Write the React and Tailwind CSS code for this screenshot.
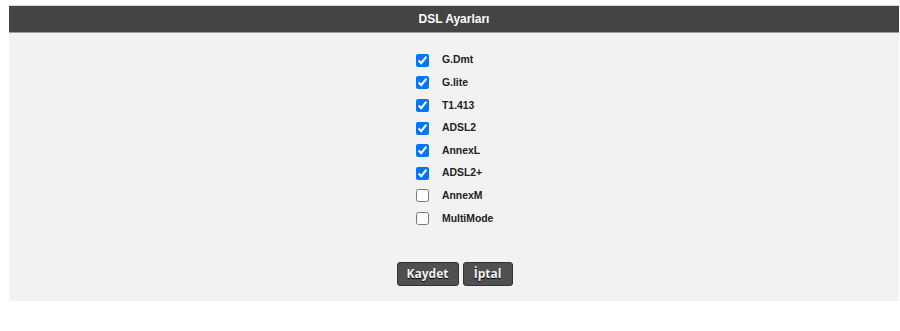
import React, { useState } from 'react'

const modes = [
  { name: 'G.Dmt', on: true },
  { name: 'G.lite', on: true },
  { name: 'T1.413', on: true },
  { name: 'ADSL2', on: true },
  { name: 'AnnexL', on: true },
  { name: 'ADSL2+', on: true },
  { name: 'AnnexM', on: false },
  { name: 'MultiMode', on: false },
]

export default function App() {
  const [state, setState] = useState(modes.map(m => m.on))

  const toggle = (i) => {
    const next = [...state]
    next[i] = !next[i]
    setState(next)
  }

  return (
    <div className="w-[900px] h-[331px] bg-white pt-[5px] pl-[9px] pr-[1px]" style={{ fontFamily: '"Liberation Sans", Arial, sans-serif' }}>
      <div className="bg-[#f2f2f2] h-[296px] flex flex-col">
        <div className="h-[28px] bg-[#444444] border-t border-t-[#d8d8d8] border-b border-b-[#9a9a9a] flex items-center justify-center">
          <h2 className="text-white font-bold text-[12px]">DSL Ayarları</h2>
        </div>

        <div className="pt-[16px] ml-[407px]">
          {modes.map((m, i) => (
            <label key={m.name} className="h-[22.6px] flex items-center cursor-pointer">
              <input
                type="checkbox"
                checked={state[i]}
                onChange={() => toggle(i)}
                className="w-[13px] h-[13px] m-0 accent-[#0075ff]"
              />
              <span className="ml-[13px] text-[10.4px] font-bold text-[#222]">{m.name}</span>
            </label>
          ))}
        </div>

        <div className="mt-[32px] flex justify-center gap-[4px] pl-[1px]">
          <button className="h-[24px] w-[62px] rounded-[3px] bg-[#505050] border border-[#333] text-[#f4f4f4] font-bold text-[12px] [text-shadow:0_1px_1px_#000]" style={{ fontFamily: '"Open Sans", Verdana, sans-serif' }}>
            Kaydet
          </button>
          <button className="h-[24px] w-[50px] rounded-[3px] bg-[#505050] border border-[#333] text-[#f4f4f4] font-bold text-[12px] [text-shadow:0_1px_1px_#000]" style={{ fontFamily: '"Open Sans", Verdana, sans-serif' }}>
            İptal
          </button>
        </div>
      </div>
    </div>
  )
}
